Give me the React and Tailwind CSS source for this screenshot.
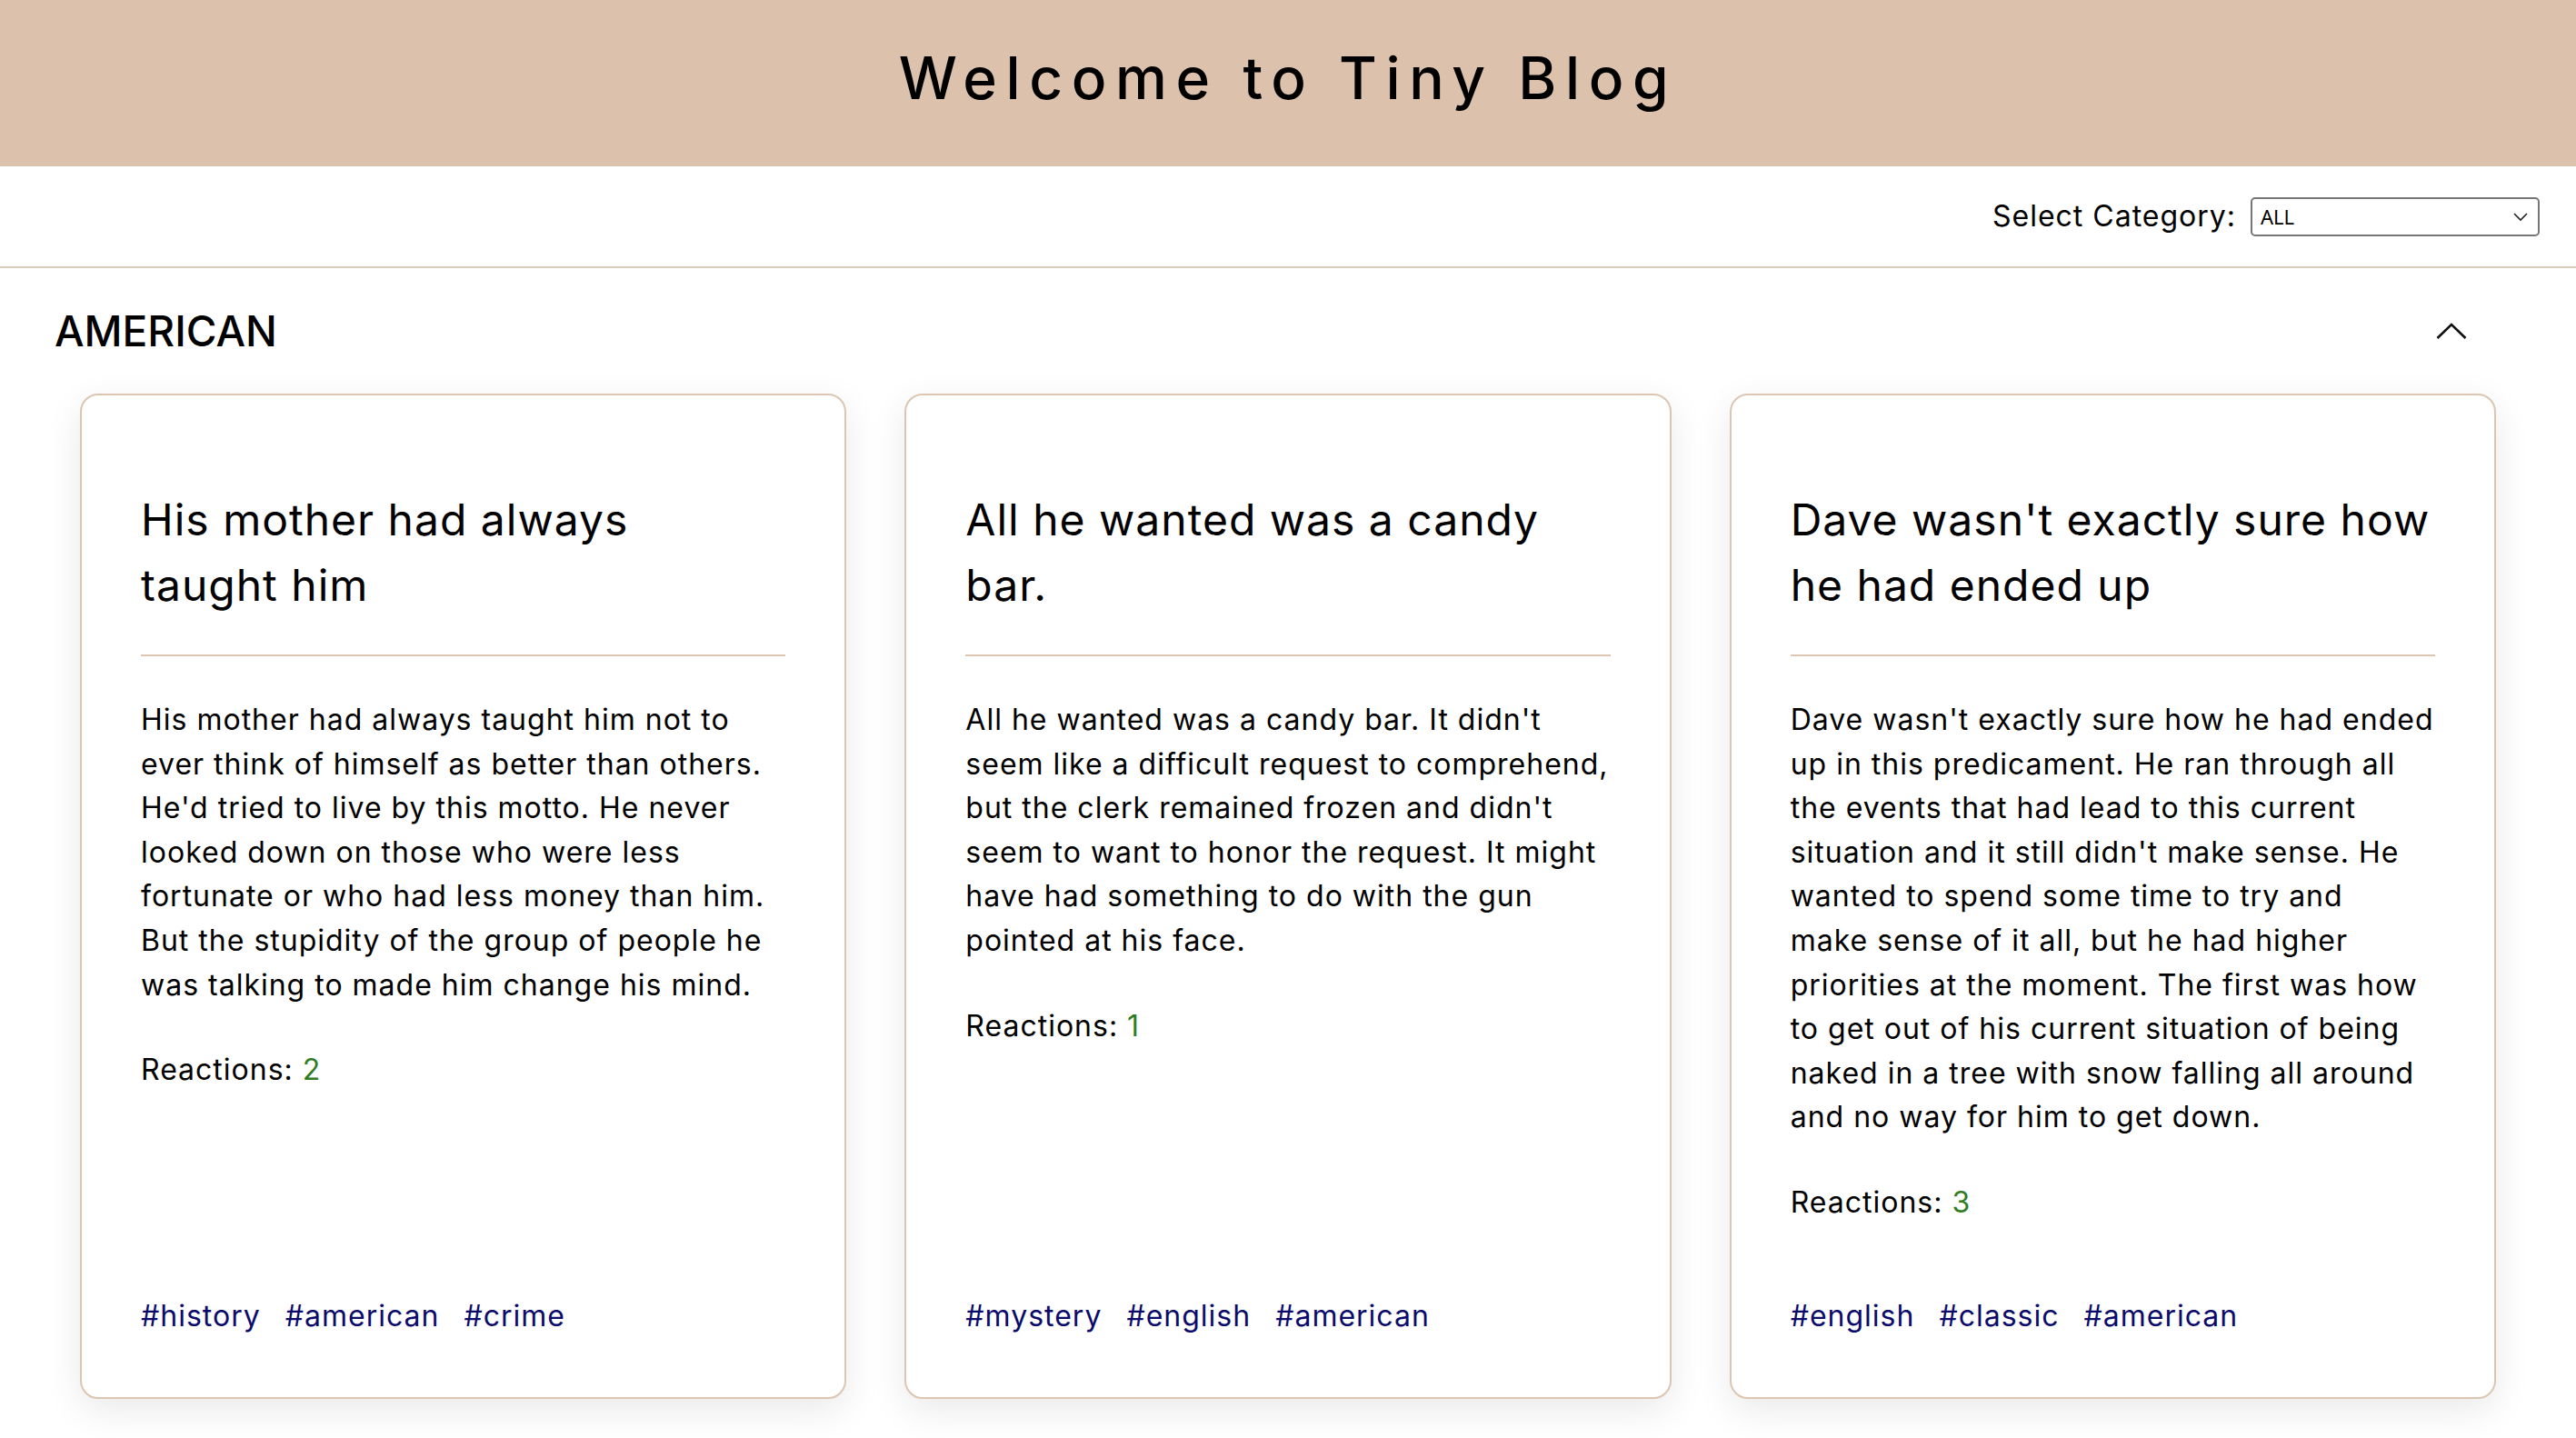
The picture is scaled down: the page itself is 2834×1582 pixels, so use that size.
import React from "react";

const posts = [
  {
    title: ["His mother had always", "taught him"],
    body: [
      "His mother had always taught him not to",
      "ever think of himself as better than others.",
      "He'd tried to live by this motto. He never",
      "looked down on those who were less",
      "fortunate or who had less money than him.",
      "But the stupidity of the group of people he",
      "was talking to made him change his mind.",
    ],
    reactions: 2,
    tags: ["history", "american", "crime"],
  },
  {
    title: ["All he wanted was a candy", "bar."],
    body: [
      "All he wanted was a candy bar. It didn't",
      "seem like a difficult request to comprehend,",
      "but the clerk remained frozen and didn't",
      "seem to want to honor the request. It might",
      "have had something to do with the gun",
      "pointed at his face.",
    ],
    reactions: 1,
    tags: ["mystery", "english", "american"],
  },
  {
    title: ["Dave wasn't exactly sure how", "he had ended up"],
    body: [
      "Dave wasn't exactly sure how he had ended",
      "up in this predicament. He ran through all",
      "the events that had lead to this current",
      "situation and it still didn't make sense. He",
      "wanted to spend some time to try and",
      "make sense of it all, but he had higher",
      "priorities at the moment. The first was how",
      "to get out of his current situation of being",
      "naked in a tree with snow falling all around",
      "and no way for him to get down.",
    ],
    reactions: 3,
    tags: ["english", "classic", "american"],
  },
];

function Card({ post }) {
  return (
    <div className="flex flex-col bg-white border-2 border-[#dcc6b2] rounded-[20px] shadow-[0_12px_40px_rgba(0,0,0,0.09)] px-[65px] pt-[101px] pb-[64px] h-[1106px]">
      <h2 className="text-[48px] leading-[72px] tracking-[1px] font-normal text-black">
        {post.title.map((l, i) => (
          <span key={i} className="block whitespace-nowrap">{l}</span>
        ))}
      </h2>
      <div className="mt-[40px] h-[2px] bg-[#dcc6b2]" />
      <p className="mt-[46px] text-[32px] leading-[48.6px] tracking-[1px] text-black">
        {post.body.map((l, i) => (
          <span key={i} className="block whitespace-nowrap">{l}</span>
        ))}
      </p>
      <p className="mt-[45px] text-[32px] leading-[48.6px] tracking-[1px] text-black">
        Reactions: <span className="text-[#2f7d1f]">{post.reactions}</span>
      </p>
      <div className="mt-auto flex gap-[27px] text-[32px] leading-[48.6px] tracking-[1px] text-[#0b0b6b]">
        {post.tags.map((t) => (
          <span key={t}>#{t}</span>
        ))}
      </div>
    </div>
  );
}

export default function App() {
  return (
    <div className="min-h-screen bg-white font-['Inter',sans-serif] text-black">
      <header className="h-[183px] bg-[#dcc1ac] flex items-center justify-center">
        <h1 className="text-[64px] font-medium tracking-[0.15em] leading-none pb-[12px]">
          Welcome to Tiny Blog
        </h1>
      </header>
      <div className="h-[112px] border-b-2 border-[#dccbbb] flex items-center justify-end pr-[40px] gap-[16px]">
        <label className="text-[32px] tracking-[1px]">Select Category:</label>
        <div className="relative w-[318px] h-[43px]">
          <select className="appearance-none w-full h-full border-2 border-[#767676] rounded-[5px] bg-white pl-[9px] text-[22px] font-['Noto_Sans',sans-serif] outline-none">
            <option>ALL</option>
          </select>
          <svg className="absolute right-[12px] top-[15px] pointer-events-none" width="18" height="12" viewBox="0 0 18 12" fill="none">
            <path d="M2 3l7 7 7-7" stroke="#222" strokeWidth="1.6" />
          </svg>
        </div>
      </div>
      <section>
        <div className="flex items-center justify-between pl-[60px] pr-[120px] h-[138px]">
          <h3 className="text-[46px] font-medium">AMERICAN</h3>
          <svg width="34" height="18" viewBox="0 0 34 18" fill="none">
            <path d="M1.5 17L17 2l15.5 15" stroke="#111" strokeWidth="2.6" />
          </svg>
        </div>
        <div className="grid grid-cols-3 gap-[64px] px-[88px] pb-[60px]">
          {posts.map((p, i) => (
            <Card key={i} post={p} />
          ))}
        </div>
      </section>
    </div>
  );
}
